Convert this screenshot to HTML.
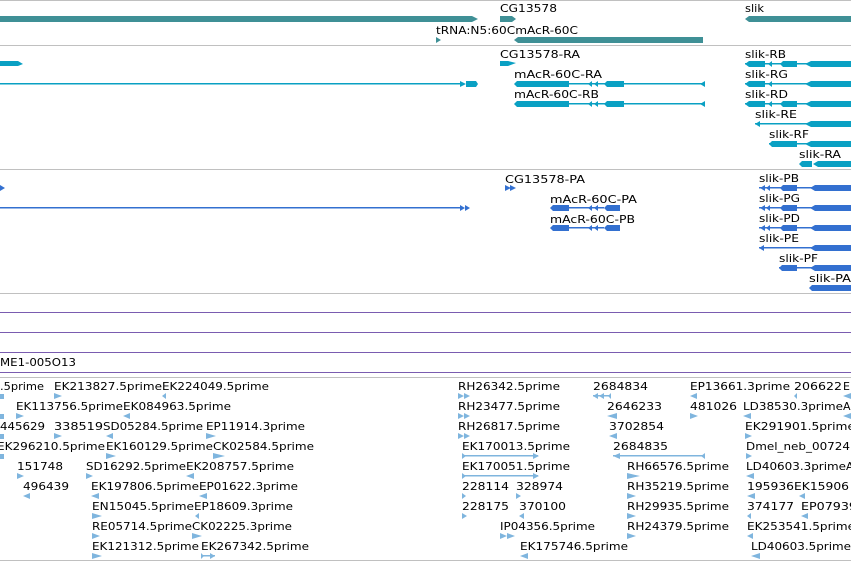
<!DOCTYPE html>
<html><head><meta charset="utf-8"><style>
html,body{margin:0;padding:0;background:#fff;width:851px;height:561px;overflow:hidden}
svg{display:block}
text{font-family:"DejaVu Sans","Liberation Sans",sans-serif;font-size:11px;fill:#000}
</style></head><body>
<svg width="851" height="561" viewBox="0 0 851 561" xmlns="http://www.w3.org/2000/svg">
<g fill="#c0c0c0">
<rect x="0" y="0" width="851" height="1"/>
<rect x="0" y="45" width="851" height="1"/>
<rect x="0" y="169" width="851" height="1"/>
<rect x="0" y="293" width="851" height="1"/>
<rect x="0" y="377" width="851" height="1"/>
<rect x="0" y="560" width="851" height="1"/>
</g>
<g fill="#7a5cb0">
<rect x="0" y="312" width="851" height="1"/>
<rect x="0" y="332" width="851" height="1"/>
<rect x="0" y="352" width="851" height="1"/>
<rect x="0" y="372" width="851" height="1"/>
</g>
<!-- genes -->
<g fill="#3f9096">
<polygon points="0,16 472,16 478,19 472,22 0,22"/>
<polygon points="500,16 512,16 516,19 512,22 500,22"/>
<polygon points="749,16 851,16 851,22 749,22 745,19"/>
<polygon points="436,37 441,40 436,43"/>
<polygon points="518,37 703,37 703,43 518,43 514,40"/>
</g>
<text x="500" y="12" textLength="57" lengthAdjust="spacingAndGlyphs">CG13578</text>
<text x="745" y="12" textLength="19" lengthAdjust="spacingAndGlyphs">slik</text>
<text x="436" y="34" textLength="142" lengthAdjust="spacingAndGlyphs">tRNA:N5:60CmAcR-60C</text>
<!-- transcripts -->
<g fill="#0aa0c3">
<polygon points="0,61 18,61 23,64 18,66 0,66"/>
<rect x="0" y="83" width="460" height="1.5"/>
<polygon points="460,81 466,84 460,87"/><polygon points="466,81 472,84 466,87"/><polygon points="466,81 476,81 478,84 476,87 466,87"/>
<polygon points="500,61 508,61 511,63 508,66 500,66"/><polygon points="508,61 516,63 508,66"/>
</g>
<text x="500" y="58" textLength="80" lengthAdjust="spacingAndGlyphs">CG13578-RA</text>
<text x="514" y="78" textLength="88" lengthAdjust="spacingAndGlyphs">mAcR-60C-RA</text>
<text x="514" y="98" textLength="85" lengthAdjust="spacingAndGlyphs">mAcR-60C-RB</text>
<g fill="#0aa0c3" id="mr">
<polygon points="517,81 569,81 569,87 517,87 514,84"/>
<rect x="569" y="83" width="136" height="1.5"/>
<polygon points="592,81 592,87 588,84"/><polygon points="598,81 598,87 594,84"/>
<polygon points="607,81 624,81 624,87 607,87 604,84"/>
<polygon points="705,81 705,87 700,84"/>
</g>
<use href="#mr" y="20"/>
<!-- slik transcripts -->
<g fill="#0aa0c3" id="sb">
<polygon points="749,61 765,61 765,67 749,67 745,64"/>
<rect x="745" y="63" width="106" height="1.5"/>
<polygon points="772,61 772,67 768,64"/>
<polygon points="783,61 797,61 797,67 783,67 780,64"/>
<polygon points="811,61 851,61 851,67 811,67 805,64"/>
</g>
<text x="745" y="58" textLength="41" lengthAdjust="spacingAndGlyphs">slik-RB</text>
<g fill="#0aa0c3">
<polygon points="749,81 765,81 765,87 749,87 745,84"/>
<rect x="745" y="83" width="106" height="1.5"/>
<polygon points="772,81 772,87 768,84"/>
<polygon points="811,81 851,81 851,87 811,87 805,84"/>
</g>
<text x="745" y="78" textLength="43" lengthAdjust="spacingAndGlyphs">slik-RG</text>
<use href="#sb" y="40"/>
<text x="745" y="98" textLength="43" lengthAdjust="spacingAndGlyphs">slik-RD</text>
<g fill="#0aa0c3">
<rect x="755" y="123" width="96" height="1.5"/>
<polygon points="760,121 760,127 755,124"/>
<polygon points="811,121 851,121 851,127 811,127 805,124"/>
<polygon points="772,141 797,141 797,147 772,147 769,144"/>
<rect x="769" y="143" width="82" height="1.5"/>
<polygon points="811,141 851,141 851,147 811,147 805,144"/>
<polygon points="802,161 812,161 812,167 802,167 799,164"/>
<polygon points="818,161 851,161 851,167 818,167 813,164"/>
</g>
<text x="755" y="118" textLength="42" lengthAdjust="spacingAndGlyphs">slik-RE</text>
<text x="769" y="138" textLength="40" lengthAdjust="spacingAndGlyphs">slik-RF</text>
<text x="799" y="158" textLength="42" lengthAdjust="spacingAndGlyphs">slik-RA</text>
<!-- proteins -->
<g fill="#3370d0">
<polygon points="0,185 5,188 0,191"/>
<rect x="0" y="207" width="460" height="1.5"/>
<polygon points="460,205 465,208 460,211"/><polygon points="465,205 470,208 465,211"/>
<polygon points="505,185 511,188 505,191"/><polygon points="510,185 516,188 510,191"/>
</g>
<text x="505" y="183" textLength="80" lengthAdjust="spacingAndGlyphs">CG13578-PA</text>
<text x="550" y="203" textLength="87" lengthAdjust="spacingAndGlyphs">mAcR-60C-PA</text>
<text x="550" y="223" textLength="85" lengthAdjust="spacingAndGlyphs">mAcR-60C-PB</text>
<g fill="#3370d0" id="mp">
<polygon points="553,205 569,205 569,211 553,211 550,208"/>
<rect x="569" y="207" width="35" height="1.5"/>
<polygon points="592,205 592,211 588,208"/><polygon points="598,205 598,211 594,208"/>
<polygon points="607,205 620,205 620,211 607,211 604,208"/>
</g>
<use href="#mp" y="20"/>
<g fill="#3370d0" id="pb">
<rect x="759" y="187" width="92" height="1.5"/>
<polygon points="765,185 765,191 760,188"/><polygon points="770,185 770,191 766,188"/>
<polygon points="783,185 797,185 797,191 783,191 780,188"/>
<polygon points="815,185 851,185 851,191 815,191 810,188"/>
</g>
<use href="#pb" y="20"/><use href="#pb" y="40"/>
<g fill="#3370d0">
<rect x="759" y="247" width="92" height="1.5"/>
<polygon points="764,245 764,251 759,248"/>
<polygon points="815,245 851,245 851,251 815,251 810,248"/>
<polygon points="782,265 797,265 797,271 782,271 779,268"/>
<rect x="779" y="267" width="72" height="1.5"/>
<polygon points="815,265 851,265 851,271 815,271 810,268"/>
<polygon points="812,285 851,285 851,291 812,291 809,288"/>
</g>
<text x="759" y="182" textLength="40" lengthAdjust="spacingAndGlyphs">slik-PB</text>
<text x="759" y="202" textLength="41" lengthAdjust="spacingAndGlyphs">slik-PG</text>
<text x="759" y="222" textLength="41" lengthAdjust="spacingAndGlyphs">slik-PD</text>
<text x="759" y="242" textLength="40" lengthAdjust="spacingAndGlyphs">slik-PE</text>
<text x="779" y="262" textLength="39" lengthAdjust="spacingAndGlyphs">slik-PF</text>
<text x="809" y="282" textLength="42" lengthAdjust="spacingAndGlyphs">slik-PA</text>
<text x="0" y="366" textLength="76" lengthAdjust="spacingAndGlyphs">ME1-005O13</text>
<!-- ESTs -->
<g fill="#7fb5de">
<rect x="0" y="394" width="4" height="5"/><polygon points="54,393 62,396 54,399"/><polygon points="166,393 166,399 162,396"/>
<rect x="0" y="414" width="4" height="5"/><polygon points="16,413 24,416 16,419"/><polygon points="130,413 130,419 123,416"/>
<rect x="0" y="434" width="4" height="5"/><polygon points="54,433 62,436 54,439"/><polygon points="113,433 113,439 106,436"/><polygon points="206,433 216,436 206,439"/>
<rect x="0" y="454" width="4" height="5"/><polygon points="106,453 116,456 106,459"/><polygon points="213,453 225,456 213,459"/>
<polygon points="17,473 24,476 17,479"/><polygon points="86,473 93,476 86,479"/><polygon points="194,473 194,479 186,476"/>
<polygon points="30,493 30,499 23,496"/><polygon points="99,493 99,499 91,496"/><polygon points="207,493 207,499 199,496"/>
<polygon points="92,513 102,516 92,519"/><polygon points="199,513 199,519 195,516"/>
<polygon points="92,533 100,536 92,539"/><polygon points="192,533 202,536 192,539"/>
<polygon points="92,553 102,556 92,559"/><rect x="201" y="555" width="14" height="1.5"/><polygon points="201,553 201,559 204,556"/><polygon points="210,553 215,556 210,559"/>
<polygon points="458,393 464,396 458,399"/><polygon points="464,393 470,396 464,399"/>
<rect x="593" y="395" width="18" height="1.5"/><polygon points="598,393 598,399 593,396"/><polygon points="604,393 604,399 599,396"/><polygon points="611,393 608,396 611,399"/>
<polygon points="697,393 697,399 690,396"/><polygon points="797,393 797,399 794,396"/><polygon points="851,393 851,399 843,396"/>
<polygon points="458,413 464,416 458,419"/><polygon points="464,413 470,416 464,419"/>
<polygon points="617,413 617,419 607,416"/><polygon points="690,413 698,416 690,419"/><polygon points="751,413 751,419 743,416"/><polygon points="851,413 851,419 843,416"/>
<polygon points="458,433 464,436 458,439"/><polygon points="464,433 470,436 464,439"/>
<polygon points="617,433 617,439 609,436"/><polygon points="745,433 752,436 745,439"/>
<rect x="462" y="455" width="76" height="1.5"/><polygon points="462,453 466,456 462,459"/><polygon points="533,453 539,456 533,459"/>
<rect x="613" y="455" width="92" height="1.5"/><polygon points="620,453 620,459 613,456"/><polygon points="705,453 705,459 701,456"/>
<polygon points="746,453 752,456 746,459"/>
<rect x="462" y="475" width="76" height="1.5"/><polygon points="462,473 466,476 462,479"/><polygon points="533,473 539,476 533,479"/>
<polygon points="627,473 640,476 627,479"/><polygon points="754,473 754,479 746,476"/>
<polygon points="462,493 466,496 462,499"/><polygon points="516,493 521,496 516,499"/><polygon points="627,493 636,496 627,499"/><polygon points="755,493 755,499 747,496"/><polygon points="805,493 805,499 799,496"/>
<polygon points="462,513 467,516 462,519"/><polygon points="524,513 524,519 519,516"/><polygon points="627,513 636,516 627,519"/><polygon points="751,513 751,519 747,516"/><polygon points="808,513 808,519 801,516"/>
<polygon points="500,533 507,536 500,539"/><polygon points="507,533 515,536 507,539"/><polygon points="627,533 636,536 627,539"/><polygon points="753,533 753,539 747,536"/>
<polygon points="528,553 528,559 520,556"/><polygon points="760,553 760,559 751,556"/>
</g>
<g>
<text x="0" y="390" textLength="44" lengthAdjust="spacingAndGlyphs">.5prime</text>
<text x="54" y="390" textLength="108" lengthAdjust="spacingAndGlyphs">EK213827.5prime</text>
<text x="162" y="390" textLength="107" lengthAdjust="spacingAndGlyphs">EK224049.5prime</text>
<text x="16" y="410" textLength="107" lengthAdjust="spacingAndGlyphs">EK113756.5prime</text>
<text x="123" y="410" textLength="108" lengthAdjust="spacingAndGlyphs">EK084963.5prime</text>
<text x="0" y="430" textLength="45" lengthAdjust="spacingAndGlyphs">445629</text>
<text x="54" y="430" textLength="49" lengthAdjust="spacingAndGlyphs">338519</text>
<text x="103" y="430" textLength="100" lengthAdjust="spacingAndGlyphs">SD05284.5prime</text>
<text x="206" y="430" textLength="99" lengthAdjust="spacingAndGlyphs">EP11914.3prime</text>
<text x="-3" y="450" textLength="108" lengthAdjust="spacingAndGlyphs">EK296210.5prime</text>
<text x="106" y="450" textLength="107" lengthAdjust="spacingAndGlyphs">EK160129.5prime</text>
<text x="213" y="450" textLength="101" lengthAdjust="spacingAndGlyphs">CK02584.5prime</text>
<text x="17" y="470" textLength="46" lengthAdjust="spacingAndGlyphs">151748</text>
<text x="86" y="470" textLength="100" lengthAdjust="spacingAndGlyphs">SD16292.5prime</text>
<text x="186" y="470" textLength="108" lengthAdjust="spacingAndGlyphs">EK208757.5prime</text>
<text x="23" y="490" textLength="46" lengthAdjust="spacingAndGlyphs">496439</text>
<text x="91" y="490" textLength="108" lengthAdjust="spacingAndGlyphs">EK197806.5prime</text>
<text x="199" y="490" textLength="99" lengthAdjust="spacingAndGlyphs">EP01622.3prime</text>
<text x="92" y="510" textLength="102" lengthAdjust="spacingAndGlyphs">EN15045.5prime</text>
<text x="194" y="510" textLength="99" lengthAdjust="spacingAndGlyphs">EP18609.3prime</text>
<text x="92" y="530" textLength="100" lengthAdjust="spacingAndGlyphs">RE05714.5prime</text>
<text x="192" y="530" textLength="100" lengthAdjust="spacingAndGlyphs">CK02225.3prime</text>
<text x="92" y="550" textLength="107" lengthAdjust="spacingAndGlyphs">EK121312.5prime</text>
<text x="201" y="550" textLength="108" lengthAdjust="spacingAndGlyphs">EK267342.5prime</text>
<text x="458" y="390" textLength="102" lengthAdjust="spacingAndGlyphs">RH26342.5prime</text>
<text x="593" y="390" textLength="55" lengthAdjust="spacingAndGlyphs">2684834</text>
<text x="690" y="390" textLength="100" lengthAdjust="spacingAndGlyphs">EP13661.3prime</text>
<text x="794" y="390" textLength="48" lengthAdjust="spacingAndGlyphs">206622</text>
<text x="843" y="390">E</text>
<text x="458" y="410" textLength="102" lengthAdjust="spacingAndGlyphs">RH23477.5prime</text>
<text x="607" y="410" textLength="55" lengthAdjust="spacingAndGlyphs">2646233</text>
<text x="690" y="410" textLength="47" lengthAdjust="spacingAndGlyphs">481026</text>
<text x="743" y="410" textLength="100" lengthAdjust="spacingAndGlyphs">LD38530.3prime</text>
<text x="843" y="410">A</text>
<text x="458" y="430" textLength="102" lengthAdjust="spacingAndGlyphs">RH26817.5prime</text>
<text x="609" y="430" textLength="55" lengthAdjust="spacingAndGlyphs">3702854</text>
<text x="745" y="430" textLength="110" lengthAdjust="spacingAndGlyphs">EK291901.5prime</text>
<text x="462" y="450" textLength="108" lengthAdjust="spacingAndGlyphs">EK170013.5prime</text>
<text x="613" y="450" textLength="55" lengthAdjust="spacingAndGlyphs">2684835</text>
<text x="746" y="450" textLength="104" lengthAdjust="spacingAndGlyphs">Dmel_neb_00724</text>
<text x="462" y="470" textLength="108" lengthAdjust="spacingAndGlyphs">EK170051.5prime</text>
<text x="627" y="470" textLength="102" lengthAdjust="spacingAndGlyphs">RH66576.5prime</text>
<text x="746" y="470" textLength="100" lengthAdjust="spacingAndGlyphs">LD40603.3prime</text>
<text x="846" y="470">A</text>
<text x="462" y="490" textLength="47" lengthAdjust="spacingAndGlyphs">228114</text>
<text x="516" y="490" textLength="47" lengthAdjust="spacingAndGlyphs">328974</text>
<text x="627" y="490" textLength="102" lengthAdjust="spacingAndGlyphs">RH35219.5prime</text>
<text x="747" y="490" textLength="47" lengthAdjust="spacingAndGlyphs">195936</text>
<text x="794" y="490" textLength="55" lengthAdjust="spacingAndGlyphs">EK15906</text>
<text x="462" y="510" textLength="47" lengthAdjust="spacingAndGlyphs">228175</text>
<text x="519" y="510" textLength="47" lengthAdjust="spacingAndGlyphs">370100</text>
<text x="627" y="510" textLength="102" lengthAdjust="spacingAndGlyphs">RH29935.5prime</text>
<text x="747" y="510" textLength="47" lengthAdjust="spacingAndGlyphs">374177</text>
<text x="801" y="510" textLength="56" lengthAdjust="spacingAndGlyphs">EP07939</text>
<text x="500" y="530" textLength="95" lengthAdjust="spacingAndGlyphs">IP04356.5prime</text>
<text x="627" y="530" textLength="102" lengthAdjust="spacingAndGlyphs">RH24379.5prime</text>
<text x="747" y="530" textLength="108" lengthAdjust="spacingAndGlyphs">EK253541.5prime</text>
<text x="520" y="550" textLength="108" lengthAdjust="spacingAndGlyphs">EK175746.5prime</text>
<text x="751" y="550" textLength="100" lengthAdjust="spacingAndGlyphs">LD40603.5prime</text>
</g>
</svg>
</body></html>
